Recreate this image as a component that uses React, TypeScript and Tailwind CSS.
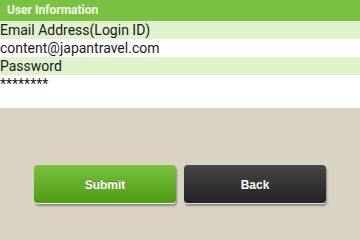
export default function App() {
  return (
    <div className="w-[360px] h-[240px] bg-[#dad3c3] flex flex-col" style={{ fontFamily: "Roboto, 'Liberation Sans', sans-serif" }}>
      <div className="h-[21px] bg-[#7bc142] text-[#f4faee] font-bold text-[12px] leading-[21px] pl-[7px]">User Information</div>
      <div className="h-[18px] bg-[#dff2cb] text-[14px] leading-[18px] text-[#1a1a1a]">Email Address(Login ID)</div>
      <div className="h-[18px] bg-white text-[14px] leading-[18px] text-[#1a1a1a]">content@japantravel.com</div>
      <div className="h-[18px] bg-[#dff2cb] text-[14px] leading-[18px] text-[#1a1a1a]">Password</div>
      <div className="h-[33px] bg-white text-[14px] leading-[18px] text-[#1a1a1a]">********</div>
      <div className="flex justify-center gap-[8px] mt-[57px]">
        <button className="w-[142px] h-[39px] pt-[2px] rounded-[4px] bg-gradient-to-b from-[#78c23c] to-[#4e9c12] text-white font-bold text-[12px] [text-shadow:0_-1px_0_rgba(0,0,0,0.3)] shadow-[1px_2px_2px_rgba(0,0,0,0.35)] border-b border-[#e8f3dc]" style={{ fontFamily: "'Liberation Sans', Arial, sans-serif" }}>Submit</button>
        <button className="w-[142px] h-[39px] pt-[2px] rounded-[4px] bg-gradient-to-b from-[#474747] to-[#232323] text-white font-bold text-[12px] shadow-[1px_2px_2px_rgba(0,0,0,0.35)] border-b border-[#e0e0e0]" style={{ fontFamily: "'Liberation Sans', Arial, sans-serif" }}>Back</button>
      </div>
    </div>
  );
}
